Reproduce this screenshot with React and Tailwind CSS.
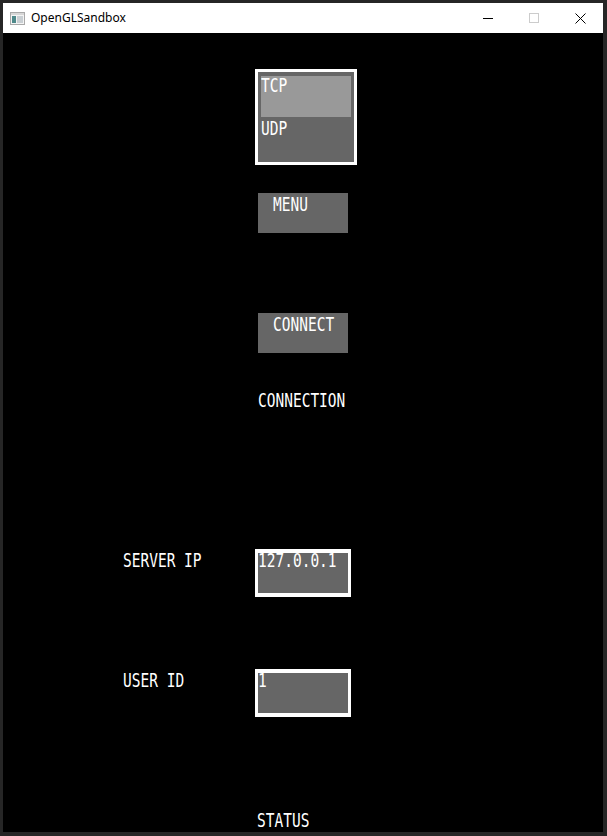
import { useState } from 'react';

function Txt({ children, className = '' }) {
  return (
    <span
      className={`block w-max origin-top-left scale-y-[1.3] whitespace-pre font-['DejaVu_Sans_Mono',monospace] text-[14.5px] leading-none text-white ${className}`}
    >
      {children}
    </span>
  );
}

function TitleBar() {
  return (
    <div className="flex h-[30px] items-center bg-white">
      <svg className="ml-[7px] h-[13px] w-[15px]" viewBox="0 0 15 13">
        <rect x="0.5" y="0.5" width="14" height="12" fill="#f4f4f4" stroke="#a9a9a9" />
        <rect x="1" y="1" width="13" height="2" fill="#d7d7d7" />
        <rect x="2" y="4" width="4" height="7" fill="#4f8a8b" />
        <rect x="7" y="4" width="6" height="7" fill="#c9cfd3" />
      </svg>
      <span className="ml-[6px] font-['Noto_Sans',sans-serif] text-[12px] text-black">OpenGLSandbox</span>
      <div className="ml-auto flex h-full">
        <div className="flex w-[46px] items-center justify-center">
          <div className="h-px w-[10px] bg-black" />
        </div>
        <div className="flex w-[46px] items-center justify-center">
          <div className="h-[10px] w-[10px] border border-[#cccccc]" />
        </div>
        <div className="flex w-[46px] items-center justify-center">
          <svg className="h-[11px] w-[11px]" viewBox="0 0 11 11">
            <path d="M0.5 0.5 L10.5 10.5 M10.5 0.5 L0.5 10.5" stroke="#000" strokeWidth="1" />
          </svg>
        </div>
      </div>
    </div>
  );
}

function InputBox({ value }) {
  return (
    <div className="h-[48px] w-[96px] border-x-[3px] border-y-[4px] border-white bg-[#666666]">
      <div className="-mt-[2px]">
        <Txt>{value}</Txt>
      </div>
    </div>
  );
}

export default function App() {
  const [protocol, setProtocol] = useState('TCP');

  return (
    <div className="flex h-[836px] w-[607px] flex-col bg-[#262626] pb-[4px] pl-[3px] pr-[4px] pt-[3px]">
      <TitleBar />
      <div className="flex flex-1 flex-col bg-black">
        {/* protocol list */}
        <div className="ml-[252px] mt-[36px] h-[96px] w-[102px] border-[3px] border-white bg-[#666666]">
          <div
            onClick={() => setProtocol('TCP')}
            className={`ml-[3px] mt-[4px] h-[41px] w-[90px] ${protocol === 'TCP' ? 'bg-[#999999]' : ''}`}
          >
            <Txt>TCP</Txt>
          </div>
          <div
            onClick={() => setProtocol('UDP')}
            className={`ml-[3px] mt-[2px] h-[41px] w-[90px] ${protocol === 'UDP' ? 'bg-[#999999]' : ''}`}
          >
            <Txt>UDP</Txt>
          </div>
        </div>

        <div className="ml-[255px] mt-[28px] h-[40px] w-[90px] bg-[#666666] pl-[15px] pt-[2px]">
          <Txt>MENU</Txt>
        </div>

        <div className="ml-[255px] mt-[80px] h-[40px] w-[90px] bg-[#666666] pl-[15px] pt-[2px]">
          <Txt>CONNECT</Txt>
        </div>

        <div className="ml-[255px] mt-[38px] h-[15px]">
          <Txt>CONNECTION</Txt>
        </div>

        <div className="mt-[143px] flex items-start">
          <div className="ml-[120px] mt-[2px] w-[132px]">
            <Txt>SERVER IP</Txt>
          </div>
          <InputBox value="127.0.0.1" />
        </div>

        <div className="mt-[72px] flex items-start">
          <div className="ml-[120px] mt-[2px] w-[132px]">
            <Txt>USER ID</Txt>
          </div>
          <InputBox value="1" />
        </div>

        <div className="ml-[254px] mt-[94px] h-[15px]">
          <Txt>STATUS</Txt>
        </div>
      </div>
    </div>
  );
}
